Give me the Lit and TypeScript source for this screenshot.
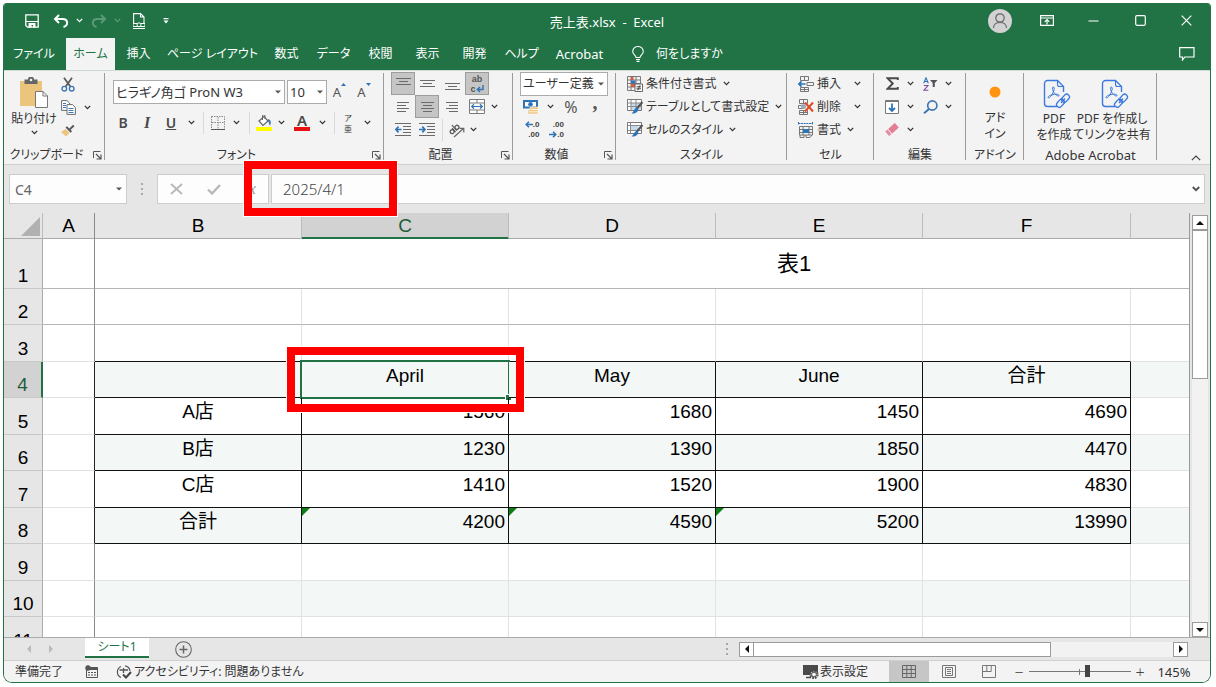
import { LitElement, html, svg, css, nothing } from "lit";
import type { TemplateResult } from "lit";
import { customElement, state } from "lit/decorators.js";
import { classMap } from "lit/directives/class-map.js";

const icon = (w: number, h: number, body: unknown) =>
  html`<svg width=${w} height=${h} viewBox="0 0 ${w} ${h}" fill="none" aria-hidden="true">${body}</svg>`;

const chevron = icon(7, 5, svg`<path d="M.8 .9 3.5 3.6 6.2 .9" stroke="currentColor" stroke-width="1.3"/>`);
const caret = icon(6, 4, svg`<path d="M0 .5H6L3 3.5Z" fill="#555"/>`);

const lines = (rows: Array<[number, number, number]>, w = 16, h = 16) =>
  icon(w, h, rows.map(([x1, x2, y]) => svg`<path d="M${x1} ${y}.5H${x2}" stroke="#6a6a6a"/>`));

const acrobat = icon(28, 30, svg`
  <path d="M14 27.5H4.5A3 3 0 0 1 1.500 24.500V4.500A3 3 0 0 1 4.500 1.500H14.500L20.500 7.500V13" stroke="#3b78e0" stroke-width="1.400"/>
  <path d="M14.500 1.500V5.500A2 2 0 0 0 16.500 7.500H20.500" stroke="#3b78e0" stroke-width="1.100"/>
  <path d="M10.300 8C12.200 8 10.800 13 8.800 16 7 18.700 5.200 19.600 5 18.500 4.800 17 9 15.300 13 15.200 16 15.200 17 16.700 15.500 17 13 17 9.300 12.500 9.500 9.200 9.500 8.400 9.800 8 10.300 8Z" stroke="#3b78e0" stroke-width="1"/>
  <rect x="18" y="16.500" width="9" height="5.500" rx="2.750" transform="rotate(-48 22.500 19.250)" stroke="#3b78e0" stroke-width="1.300"/>
  <rect x="13" y="21.500" width="9" height="5.500" rx="2.750" transform="rotate(-48 17.500 24.250)" stroke="#3b78e0" stroke-width="1.300"/>
  <path d="M18 24 22 19.500" stroke="#3b78e0" stroke-width="1.200"/>`);

const I = {
  save: icon(14, 14, svg`<path d="M.8 .8H13.200V13.200H2.500L.8 11.500Z" stroke="#fff" stroke-width="1.300"/><path d="M1 7.500H13" stroke="#fff"/><path d="M3.500 9H10.500V13.500H8V11H6.500V13.500H3.500Z" fill="#fff"/>`),
  undo: icon(16, 14, svg`<path d="M6 1 2 5 6 9M2.300 5H9.500C15.500 5 15.500 11.500 10.500 13" stroke="currentColor" stroke-width="2"/>`),
  redo: icon(16, 14, svg`<path d="M10 1 14 5 10 9M13.700 5H6.500C.5 5 .5 11.500 5.500 13" stroke="currentColor" stroke-width="2"/>`),
  preview: icon(12, 16, svg`<path d="M.6 10V.6H7.500L11 4V10M7.500 .6V4H11" stroke="#fff" stroke-width="1.100"/><path d="M0 10.500H12V13.500H0Z" stroke="#fff"/><circle cx="6" cy="11.800" r="2" fill="#217346" stroke="#fff"/><path d="M0 15.500H12" stroke="#fff"/>`),
  custom: icon(6, 6, svg`<path d="M.5 .7H5.500" stroke="#fff" stroke-width="1.200"/><path d="M.5 2.500H5.500L3 5.500Z" fill="#fff"/>`),
  user: icon(24, 24, svg`<circle cx="12" cy="12" r="12" fill="#d2d2d2"/><circle cx="12" cy="9" r="4.200" stroke="#666" stroke-width="1.200"/><path d="M5.500 19C5.500 11.500 18.500 11.500 18.500 19" stroke="#666" stroke-width="1.200"/>`),
  ribbon: icon(14, 11, svg`<path d="M.6 .6H13.400V10.400H.6ZM.6 3H13.400" stroke="#fff" stroke-width="1.200"/><path d="M7 9.500V4.500M4.700 6.800 7 4.500 9.300 6.800" stroke="#fff" stroke-width="1.200"/>`),
  min: icon(11, 2, svg`<path d="M.5 1H10.500" stroke="#fff" stroke-width="1.200"/>`),
  max: icon(11, 11, svg`<rect x=".7" y=".7" width="9.600" height="9.600" rx="1.200" stroke="#fff" stroke-width="1.200"/>`),
  close: icon(11, 11, svg`<path d="M.7 .7 10.300 10.300M10.300 .7 .7 10.300" stroke="#fff" stroke-width="1.200"/>`),
  bulb: icon(12, 16, svg`<path d="M4 11.500C4 9 .7 8.500 .7 5.500A5.300 5 0 0 1 11.300 5.500C11.300 8.500 8 9 8 11.500Z" stroke="#fff" stroke-width="1.100"/><path d="M4 13.500H8M4.500 15.300H7.500" stroke="#fff" stroke-width="1.200"/>`),
  comment: icon(16, 14, svg`<path d="M.7 .7H15V10H5.800L3.500 13V10H.7Z" stroke="#fff" stroke-width="1.200"/>`),
  paste: icon(28, 31, svg`<path d="M0 4H22V29H0Z" fill="#ecc57c"/><path d="M4.500 2.500H8A3 3 0 0 1 14 2.500H17.500V7H4.500Z" fill="#666"/><circle cx="11" cy="3" r="1.300" fill="#f3f3f3"/><path d="M15.500 14.500H23L27.500 19V30.500H15.500Z" fill="#fff" stroke="#777"/><path d="M23 14.500V19H27.500" stroke="#777"/>`),
  cut: icon(14, 15, svg`<path d="M3 .8 9.500 9.800M11 .8 4.500 9.800" stroke="#5a5a5a" stroke-width="1.800"/><circle cx="3.300" cy="11.700" r="2.300" stroke="#3f77b4" stroke-width="1.400"/><circle cx="10.700" cy="11.700" r="2.300" stroke="#3f77b4" stroke-width="1.400"/>`),
  copy: icon(15, 15, svg`<path d="M.6 .6H6L8.500 3V10.400H.6Z" fill="#fff" stroke="#6b6b6b"/><path d="M6 4.600H11.500L14.400 7.500V14.400H6Z" fill="#fff" stroke="#6b6b6b"/><path d="M2 3.500H5M2 5.500H5M2 7.500H5M7.500 8.500H12.500M7.500 10.500H12.500M7.500 12.500H12.500" stroke="#3f77b4"/>`),
  brush: icon(14, 13, svg`<path d="M0 8 4.500 5 8.500 9 5 12.500Z" fill="#ecc57c"/><path d="M4.500 3.500 6 2.300 8.300 4.500 12 .8 13.500 2.300 9.700 5.800 11 7.500 9.500 8.800Z" fill="#5a5a5a"/>`),
  launcher: icon(9, 9, svg`<path d="M.5 7V.5H7.500" stroke="#555"/><path d="M3 3 7.500 7.500M8 3.500V8H3.500" stroke="#555" stroke-width="1.200"/>`),
  border: icon(14, 14, svg`<path d="M.5 .5H13.500V13M.5 .5V13M7 1V13M1 6.500H13" stroke="#8a8a8a" stroke-dasharray="1.500 1"/><path d="M0 13.500H14" stroke="#555"/>`),
  fill: icon(16, 16, svg`<path d="M3 6 8 1.500 12 6 7 10.500Z" fill="#fff" stroke="#666" stroke-width="1.200"/><path d="M6.500 5V1A1.200 1.200 0 0 1 9 1V4" stroke="#666"/><path d="M12.300 4C15 5 15.500 8 14 10.500 12.500 9 13.500 7 11.500 6Z" fill="#3f77b4"/><path d="M0 12H16V16H0Z" fill="#ffff00"/>`),
  merge: icon(16, 15, svg`<path d="M.5 .5H15.500V14.500H.5Z" fill="#fff" stroke="#7a7a7a"/><path d="M.5 4H15.500M.5 11H15.500M8 .5V4M8 11V14.500" stroke="#7a7a7a"/><path d="M2.500 7.500H13.500M5 5.300 2.700 7.500 5 9.700M11 5.300 13.300 7.500 11 9.700" stroke="#2f73b7" stroke-width="1.200"/>`),
  dec: icon(16, 13, svg`<path d="M0 .5H16M8 3.500H16M8 6.500H16M8 9.500H16M0 12.500H16" stroke="#6a6a6a"/><path d="M6.500 6.500H1M3.500 3.700 .9 6.500 3.500 9.300" stroke="#2f73b7" stroke-width="1.700"/>`),
  inc: icon(16, 13, svg`<path d="M0 .5H16M8 3.500H16M8 6.500H16M8 9.500H16M0 12.500H16" stroke="#6a6a6a"/><path d="M0 6.500H5.500M3.300 3.700 5.900 6.500 3.300 9.300" stroke="#2f73b7" stroke-width="1.700"/>`),
  orient: icon(16, 16, svg`<g transform="rotate(-42 5 8)" stroke="#555" stroke-width="1.200"><circle cx="2.500" cy="8" r="2"/><path d="M4.800 5.500V10.500"/><circle cx="9" cy="8" r="2"/><path d="M6.800 3V10.500"/></g><path d="M5 15 14.500 6.500M10.500 6.300H14.800V10.500" stroke="#666" stroke-width="1.200"/>`),
  currency: icon(16, 16, svg`<path d="M0 1H15V9.500H0Z" fill="#2f73b7"/><path d="M2 3H13V7.500H2Z" fill="#fff"/><circle cx="7.500" cy="5.200" r="2.300" fill="#2f73b7"/><path d="M7 8H15V15H5V11H7Z" fill="#ecc57c" stroke="#fff" stroke-width=".5"/><path d="M6 12.800H15M8 10.500H15" stroke="#fff" stroke-width=".8"/>`),
  cond: icon(16, 16, svg`<path d="M.5 .5H13.500V14.500H.5ZM.5 4H13.500M.5 7.500H13.500M.5 11H13.500M4 .5V14.500M9 .5V14.500" stroke="#7a7a7a"/><path d="M4 1H6.500V4H4ZM4 8H9V11H4Z" fill="#e2563a"/><path d="M4 4.500H8.500V7.500H4Z" fill="#2f73b7"/><path d="M8 8H15.500V15.500H8Z" fill="#fff" stroke="#666"/><path d="M9.500 10.800H14M9.500 12.800H14M13 9.300 10.700 14.300" stroke="#444"/>`),
  tstyle: icon(16, 15, svg`<path d="M.5 .5H14.500V11.500H.5Z" fill="#fff" stroke="#7a7a7a"/><path d="M4 4H14V11H4Z" fill="#c3d9ef"/><path d="M.5 4H14.500M.5 7.500H14.500M4 .5V11.500M9 .5V11.500" stroke="#8a8a8a"/><path d="M15.500 3 10 9.500" stroke="#555" stroke-width="2.200"/><path d="M10.500 8.500C12.500 11 10 15 4.500 14.500 7 13 7 9 10.500 8.500Z" fill="#2f73b7"/>`),
  cstyle: icon(16, 15, svg`<path d="M.5 .5H14.500V11.500H.5Z" fill="#fff" stroke="#7a7a7a"/><path d="M3.500 3.500H11.500V8.500H3.500Z" fill="#c3d9ef"/><path d="M.5 3.500H14.500M.5 8.500H14.500M3.500 .5V11.500" stroke="#8a8a8a"/><path d="M15.500 3 10 9.500" stroke="#555" stroke-width="2.200"/><path d="M10.500 8.500C12.500 11 10 15 4.500 14.500 7 13 7 9 10.500 8.500Z" fill="#2f73b7"/>`),
  ins: icon(16, 16, svg`<path d="M2.500 .5H10.500V4.500H2.500ZM6.500 .5V4.500M2.500 11.500H10.500V15.500H2.500ZM6.500 11.500V15.500M9 6.500H15.500V9.500H9ZM2.500 13.500H10.500" stroke="#777"/><path d="M7.500 8H1M3.500 5.300 .9 8 3.500 10.700" stroke="#2f73b7" stroke-width="1.700"/>`),
  del: icon(16, 16, svg`<path d="M1.500 .5H9.500V4.500H1.500ZM5.500 .5V4.500M1.500 11.500H9.500V15.500H1.500ZM5.500 11.500V15.500M1.500 13.500H9.500M.5 6.500H6V9.500H.5Z" stroke="#777"/><circle cx="5.500" cy="7.500" r="2.500" fill="#9ab"/><path d="M7 3.500 15 12.500M15 3.500 7 12.500" stroke="#e04a26" stroke-width="2"/>`),
  fmt: icon(16, 16, svg`<path d="M.5 1.500H14.500M.5 0V3M14.500 0V3" stroke="#2f73b7" stroke-dasharray="2 .6"/><path d="M1.500 4.500H14.500V13H1.500ZM1.500 7.500H14.500M1.500 10.500H14.500M5 4.500V13M11 4.500V13M2 13V15.500H6V13M8 13V15.500H12L14 13" stroke="#777"/><path d="M5 7H11V11H5Z" fill="#2f73b7"/>`),
  sum: icon(13, 13, svg`<path d="M11.800 3V1.200H1.600L6.800 6.500 1.600 11.800H11.800V10" stroke="#4a4a4a" stroke-width="1.900"/>`),
  down: icon(14, 14, svg`<path d="M.5 .5H13.500V13.500H.5Z" fill="#fff" stroke="#777"/><path d="M.5 1.500H13.500" stroke="#777"/><path d="M7 3.500V11M4 8 7 11 10 8" stroke="#2f73b7" stroke-width="1.800"/>`),
  eraser: icon(14, 13, svg`<g transform="rotate(-42 7 6.500)"><path d="M.5 3.500H3.500V9.500H.5Z" fill="#e78ba0"/><path d="M4.500 3.500H13.500V9.500H4.500Z" fill="#e27d94"/></g>`),
  sort: icon(15, 14, svg`<path d="M.7 6.200 3 .8 5.300 6.200M1.500 4.500H4.500" stroke="#2f73b7" stroke-width="1.100"/><path d="M.8 8.500H5L.8 13.300H5.300" stroke="#7b4a9b" stroke-width="1.100"/><path d="M7 3H14.500L11.800 6V10H9.700V6Z" fill="#555"/>`),
  find: icon(15, 14, svg`<circle cx="9.300" cy="5.500" r="4.600" stroke="#3f77b4" stroke-width="1.700"/><path d="M6 9 1 13.300" stroke="#3f77b4" stroke-width="2"/>`),
  addin: icon(14, 14, svg`<circle cx="7" cy="7" r="5.500" fill="#ff9410"/>`),
  cancel: icon(13, 12, svg`<path d="M1 1 12 11M12 1 1 11" stroke="#b9b9b9" stroke-width="1.900"/>`),
  check: icon(14, 11, svg`<path d="M1 5.500 5 9.500 13 1" stroke="#b9b9b9" stroke-width="2.400"/>`),
  dots: icon(3, 12, svg`<path d="M0 0H2V2H0ZM0 5H2V7H0ZM0 10H2V12H0Z" fill="#a9a9a9"/>`),
  up: icon(8, 4, svg`<path d="M0 4H8L4 0Z" fill="#111"/>`),
  dn: icon(8, 4, svg`<path d="M0 0H8L4 4Z" fill="#111"/>`),
  lt: icon(4, 8, svg`<path d="M4 0V8L0 4Z" fill="currentColor"/>`),
  rt: icon(4, 8, svg`<path d="M0 0V8L4 4Z" fill="currentColor"/>`),
  plus: icon(17, 17, svg`<circle cx="8.500" cy="8.500" r="7.800" stroke="#666" stroke-width="1.100"/><path d="M4.500 8.500H12.500M8.500 4.500V12.500" stroke="#666" stroke-width="1.500"/>`),
  macro: icon(13, 13, svg`<path d="M2.500 2.500H12.500V12.500H1.500V5" stroke="#555"/><path d="M5 2.500H12.500V5H5Z" fill="#555"/><circle cx="3" cy="3" r="2.700" fill="#555"/><path d="M3 7.500H11M3 10H11" stroke="#555" stroke-dasharray="2 1"/>`),
  access: icon(16, 14, svg`<path d="M5 1.500A6 6 0 0 0 5 12.500M9 .8A6 6 0 0 1 14 6" stroke="#555" stroke-width="1.200"/><path d="M3.500 5H12M7.500 3V8" stroke="#555" stroke-width="1.300"/><path d="M7 9.500 10 12.500 15 7" stroke="#444" stroke-width="2"/>`),
  display: icon(16, 15, svg`<path d="M0 1H15V8H9V11H0Z" fill="#4a4a4a"/><path d="M3 13.500H8" stroke="#4a4a4a" stroke-width="1.500"/><circle cx="11" cy="10.500" r="3.600" fill="#f3f3f3" stroke="#4a4a4a" stroke-width="2" stroke-dasharray="1.800 1"/><circle cx="11" cy="10.500" r="2.400" stroke="#4a4a4a"/>`),
  vNormal: icon(14, 13, svg`<path d="M.5 .5H13.500V12.500H.5ZM.5 4.500H13.500M.5 8.500H13.500M4.800 .5V12.500M9.200 .5V12.500" stroke="#666"/>`),
  vPage: icon(14, 13, svg`<path d="M.5 .5H13.500V12.500H.5ZM3.500 2.500H10.500V10.500H3.500ZM5 4.500H9M5 6.500H9M5 8.500H9" stroke="#777"/>`),
  vBreak: icon(14, 13, svg`<path d="M.5 .5H13.500V12.500H.5ZM4.800 .5V6.500M9.200 .5V6.500H.5" stroke="#777"/>`),
  collapse: icon(10, 6, svg`<path d="M.8 5.200 5 1 9.200 5.200" stroke="#444" stroke-width="1.200"/>`),
  corner: icon(19, 19, svg`<path d="M19 0V19H0Z" fill="#b1b1b1"/>`),
  fdrop: icon(8, 6, svg`<path d="M.8 1 4 4.200 7.200 1" stroke="#555" stroke-width="2"/>`),
  grow: icon(5, 3, svg`<path d="M0 3 2.500 0 5 3Z" fill="#2f73b7"/>`),
  shrink: icon(5, 3, svg`<path d="M0 0H5L2.500 3Z" fill="#2f73b7"/>`),
  arrowL: icon(8, 7, svg`<path d="M8 3.500H1.500M4 .8 1.200 3.500 4 6.200" stroke="#2f73b7" stroke-width="1.500"/>`),
  arrowR: icon(8, 7, svg`<path d="M0 3.500H6.500M4 .8 6.800 3.500 4 6.200" stroke="#2f73b7" stroke-width="1.500"/>`),
  ret: icon(8, 8, svg`<path d="M7 0V4.500H1.500M4 2 1.300 4.500 4 7" stroke="#2f73b7" stroke-width="1.400"/>`),
};

interface Row { n: number; cells: string[]; }

const ROWS: Row[] = [
  { n: 4, cells: ["", "April", "May", "June", "合計"] },
  { n: 5, cells: ["A店", "1560", "1680", "1450", "4690"] },
  { n: 6, cells: ["B店", "1230", "1390", "1850", "4470"] },
  { n: 7, cells: ["C店", "1410", "1520", "1900", "4830"] },
  { n: 8, cells: ["合計", "4200", "4590", "5200", "13990"] },
];

const TABS: Array<[string, string]> = [
  ["ファイル", "t-l"], ["ホーム", "on"], ["挿入", ""], ["ページ レイアウト", "t-xl"], ["数式", ""], ["データ", ""],
  ["校閲", ""], ["表示", ""], ["開発", ""], ["ヘルプ", ""], ["Acrobat", "t-m"],
];

@customElement("app-root")
export class AppRoot extends LitElement {
  @state() private zoom = 58;

  static styles = css`
    :host { display: block; min-height: 100vh; box-sizing: border-box; padding: 3px 5px 4px 3px; background: #fff;
      font: 12px/16px "Noto Sans", "Noto Sans CJK JP", sans-serif; font-feature-settings: "palt"; color: #333; }
    *, *::before { box-sizing: border-box; }
    svg { display: block; flex: none; }
    button { appearance: none; border: 0; background: none; padding: 0; margin: 0; font: inherit; color: inherit;
      font-feature-settings: inherit; display: flex; align-items: center; justify-content: center; white-space: nowrap; }
    input, select { appearance: none; font: inherit; color: inherit; font-feature-settings: inherit; margin: 0; min-width: 0;
      border: 1px solid #ababab; border-radius: 0; background: #fff; outline: none; }
    .window { height: calc(100vh - 7px); min-height: 480px; display: grid; grid-template-rows: 35px 32px 95px 48px 1fr 23px 22px;
      border: 1px solid #217346; border-top: 0; border-radius: 4px 4px 9px 9px; overflow: hidden; background: #e6e6e6; }
    .title { background: #217346; color: #fff; display: grid; grid-template-columns: 1fr auto 1fr; align-items: center; }
    .title h1 { font: inherit; font-size: 13px; margin: 2px 0 0; white-space: pre; }
    .quick { display: grid; grid-template-columns: 32px 26px 10px 29px 8px 36px 18px; padding-left: 12px; height: 22px; }
    .dim { color: #5b9a78; }
    .sys { display: grid; grid-template-columns: 46px 47px 47px 46px 47px; justify-content: end; height: 32px; }
    .tabs { background: #217346; color: #fff; display: flex; }
    .tabs button { width: 47px; font-size: 12px; }
    .tabs .on { width: 49px; background: #f3f3f3; color: #217346; }
    .tabs .t-l { width: 62px; padding-right: 2px; }
    .tabs .t-xl { width: 101px; }
    .tabs .t-m { width: 69px; font-size: 13px; }
    .tabs .tell { width: auto; gap: 12px; padding-left: 18px; }
    .tabs .note { margin-left: auto; }
    .ribbon { background: #f3f3f3; border-top: 1px solid #cfd8d3; border-bottom: 1px solid #d0d0d0; display: grid;
      grid-template-columns: 101px 279px 129px 103px 171px 87px 92px 58px 133px 1fr; }
    .group { display: grid; grid-template: 74px 18px / minmax(0, 1fr); padding-top: 1px; position: relative; }
    .group::after { content: ""; position: absolute; right: 0; top: 2px; height: 87px; width: 1px; background: #9b9b9b; }
    .name { display: grid; grid-template-columns: minmax(0, 1fr); align-items: center; justify-items: center; white-space: nowrap; font-size: 12px; }
    .name.more { grid-template-columns: 1fr 16px; }
    .latin { font-size: 13px; }
    .stack { display: grid; grid-auto-rows: 23px; align-content: start; }
    .row { display: grid; align-items: center; justify-items: center; }
    .row > button { width: 100%; height: 23px; }
    .pressed { background: #c5c5c5; border: 1px solid #9d9d9d; }
    .bar { width: 1px; height: 22px; background: #d8d8d8; }
    .big { flex-direction: column; justify-content: flex-start; }
    .clip { display: grid; grid-template-columns: 44px 24px 14px; padding-left: 8px; }
    .clip .big { padding-top: 5px; gap: 3px; }
    .clip .stack { padding-top: 1px; }
    .font { padding: 8px 0 0 6px; display: grid; grid-template-rows: 23px 23px; gap: 8px; }
    .f1 { grid-template-columns: 176px 40px 25px 24px; }
    .f2 { grid-template-columns: 24px 24px 24px 16px 8px 22px 14px 12px 18px 16px 26px 14px 10px 18px 20px; }
    .combo { display: grid; width: 100%; align-items: center; }
    .combo > * { grid-area: 1 / 1; }
    .combo select { height: 24px; padding: 0 2px; width: 100%; font-size: 13px; }
    .combo svg { justify-self: end; margin-right: 4px; pointer-events: none; }
    .f1 .wide { padding: 0 2px; }
    .size { display: flex; font-size: 13px; line-height: 20px; color: #555; }
    .size svg { margin-top: 1px; }
    .glyph { font-size: 14px; font-weight: 600; color: #4a4a4a; }
    .it { font-style: italic; font-family: "Liberation Serif", serif; font-size: 16px; }
    .un { text-decoration: underline; }
    .fc { border-bottom: 4px solid #e81010; line-height: 13px; width: 16px; font-size: 15px; }
    .ruby { display: grid; font: 8px/11px "Noto Sans CJK JP", sans-serif; justify-items: center; }
    .al { padding-left: 7px; }
    .a1 { grid-template-columns: 24px 24px 26px 24px 10px; }
    .a3 { grid-template-columns: 24px 24px 6px 24px 8px; }
    .wrap { display: grid; grid-template-columns: 6px 8px; font: bold 9px/10px "Liberation Sans", sans-serif; color: #555; align-items: center; }
    .wrap span { grid-column: span 2; }
    .num { padding-left: 7px; }
    .num .combo { width: 88px; }
    .num .combo select { font-size: 12px; }
    .n2 { grid-template-columns: 22px 16px 26px 22px; justify-content: start; }
    .n3 { grid-template-columns: 24px 25px; justify-content: start; }
    .pct { font-size: 16px; color: #555; }
    .comma { font: bold 20px/23px "Liberation Serif", serif; color: #555; padding-bottom: 8px; }
    .dp { display: grid; justify-items: end; font: bold 8px/10px "Liberation Sans", sans-serif; color: #444; }
    .dp span { display: flex; align-items: center; }
    .list { padding-left: 11px; }
    .list button { justify-content: flex-start; gap: 3px; }
    .list .c { margin-left: 3px; }
    .list .far .c { margin-left: 10px; }
    .edit { padding-left: 8px; }
    .e1 { grid-template-columns: 20px 16px 24px 12px; }
    .tall { padding-top: 5px; display: grid; }
    .tall button { gap: 3px; }
    .tall button svg { height: 30px; }
    .pdfs { display: grid; grid-template-columns: 42px 74px; padding: 7px 0 0 9px; align-items: start; }
    .pdfs svg { margin-left: 6px; }
    .pdfs button { gap: 2px; }
    .last { display: flex; align-items: flex-end; justify-content: flex-end; padding: 0 9px 3px 0; }
    .formula { display: grid; grid-template-columns: 118px 30px 112px 1fr; padding: 9px 5px 9px 5px; position: relative; align-items: stretch; }
    .formula input, .trio { border: 1px solid #cdcdcd; background: #fdfdfd; height: 30px; }
    .formula input { width: 100%; padding: 0 5px; font-size: 14px; color: #666; }
    .formula .combo svg { margin-right: 5px; }
    .grip { display: grid; place-items: center; }
    .trio { display: grid; grid-template-columns: 37px 37px 36px; }
    .fx { font: italic 16px "Liberation Serif", serif; color: #999; }
    .formula .value { padding-left: 2px; }
    .formula .value input { padding-left: 11px; font-size: 15px; font-weight: 300; color: #444; }
    .mark { position: absolute; border: 8px solid #f00; outline: 1px solid #fff; pointer-events: none; z-index: 5; }
    .m1 { left: 240px; top: -4px; width: 153px; height: 55px; }
    .m2 { left: -15px; top: -15px; right: -16px; bottom: -15px; }
    .sheet { display: grid; grid-template-columns: 1fr 20px; min-height: 0; min-width: 0; }
    .view { overflow: hidden; border-right: 1px solid #9b9b9b; min-width: 0; min-height: 0;
      font-feature-settings: normal; font-family: "Liberation Sans", "Noto Sans CJK JP", sans-serif; color: #000; font-size: 19px; }
    table { table-layout: fixed; border-collapse: separate; border-spacing: 0; width: 1490px; background: #fff; }
    th, td { padding: 0; font-weight: 400; border-right: 1px solid #e0e3e2; border-bottom: 1px solid #e0e3e2; line-height: 28px; vertical-align: top; overflow: visible; }
    .w0 { width: 39px; } .w1 { width: 52px; } .w2 { width: 207px; } .w3 { width: 208px; } .w4 { width: 156px; }
    thead th { height: 26px; line-height: 25px; background: #e6e6e6; border-color: #ababab; border-right-color: #bcbcbc; }
    thead .sel { background: #d2d2d2; color: #1e5c3a; border-bottom-color: #217346; box-shadow: inset 0 -1px #217346; }
    thead svg { margin-left: 17px; margin-top: 4px; }
    tbody th { background: #e6e6e6; line-height: 24px; vertical-align: bottom; border-right-color: #ababab; border-bottom-color: #c9c9c9; }
    tbody .sel th { background: #d2d2d2; color: #1e5c3a; border-right: 2px solid #217346; }
    tr.h50 > * { height: 50px; }
    tr.h36 > * { height: 36px; }
    tr.h37 > * { height: 37px; }
    tbody td:nth-child(2) { border-right-color: #8a8a8a; }
    thead th:nth-child(2) { border-right-color: #8a8a8a; }
    tr.line td { border-bottom-color: #b5b5b5; }
    .merged { text-align: center; vertical-align: middle; font-size: 22px; }
    tr.band td:nth-child(n + 3) { background: #f3f7f6; }
    tr.top td:nth-child(n + 3):nth-child(-n + 7) { border-bottom-color: #111; }
    tr.data td:nth-child(n + 3):nth-child(-n + 7) { border-color: #111; text-align: right; padding-right: 3px; position: relative; }
    tr.data td.mid:nth-child(n + 3):nth-child(-n + 7) { text-align: center; padding-right: 0; }
    tr.data td:nth-child(2) { border-right-color: #222; }
    .cursor { position: absolute; inset: -2px; border: 2px solid #217346; }
    .cursor::after { content: ""; position: absolute; right: -3px; bottom: -3px; width: 5px; height: 5px; background: #217346; outline: 1px solid #fff; }
    .flag { position: absolute; left: 0; top: 0; border-top: 8px solid #0d7d18; border-right: 8px solid transparent; }
    .vs { display: grid; grid-template-rows: 15px 1fr 15px; width: 16px; margin: 2px 0 0 2px; background: #f2f2f2; }
    .sq { background: #fff; border: 1px solid #9b9b9b; color: #111; }
    .vt { background: #fff; border: 1px solid #9b9b9b; height: 100%; }
    .vbar { display: grid; grid-template-rows: 38% 1fr; }
    .foot { border-top: 1px solid #ababab; display: grid; grid-template-columns: 81px 64px 68px 1fr 484px; align-items: stretch; }
    .nav { display: flex; gap: 18px; align-items: center; padding-left: 23px; color: #b9b9b9; }
    .stab { background: #fff; color: #217346; border-bottom: 2px solid #217346; height: 20px; }
    .hs { display: grid; grid-template-columns: 13px 15px 1fr 15px 22px; align-items: center; }
    .hs > button { height: 15px; }
    .track { background: #f2f2f2; height: 15px; }
    .ht { background: #fff; border: 1px solid #9b9b9b; border-left: 0; height: 15px; width: 71%; }
    .status { background: #f3f3f3; border-top: 1px solid #d0d0d0; display: flex; align-items: center; padding-left: 11px; white-space: nowrap; }
    .status .st { gap: 2px; margin-left: 18px; }
    .status .mac { margin-left: 22px; }
    .right { margin-left: auto; display: grid; grid-template-columns: 86px 40px 40px 40px 20px 102px 18px 61px; height: 100%; }
    .right .disp { justify-content: flex-start; gap: 1px; }
    .cur { background: #c6c6c6; }
    .sign { font-size: 16px; font-weight: 300; color: #444; }
    .right .pc { font-size: 13px; padding-right: 11px; }
    input[type="range"] { border: 0; height: 20px; width: 102px; background:
      linear-gradient(#777, #777) 50px 8px / 1px 6px no-repeat, linear-gradient(#777, #777) 0 10px / 100% 1px no-repeat; }
    input[type="range"]::-webkit-slider-thumb { appearance: none; width: 5px; height: 12px; background: #444; }
  `;

  private group(name: string, body: TemplateResult, launcher = true, latin = false) {
    return html`<section class="group">${body}
      <div class=${classMap({ name: true, more: launcher })}><span class=${latin ? "latin" : ""}>${name}</span>
        ${launcher ? html`<button aria-label="${name}の詳細">${I.launcher}</button>` : nothing}</div></section>`;
  }

  private b(label: string, body: unknown, cls = "") {
    return html`<button class=${cls} aria-label=${label}>${body}</button>`;
  }

  private get drop() { return this.b("オプション", chevron); }

  private renderRibbon() {
    const bar = html`<i class="bar"></i>`;
    return html`<div class="ribbon">
      ${this.group("クリップボード", html`<div class="clip">
        <button class="big">${I.paste}<span>貼り付け</span>${chevron}</button>
        <div class="stack row">${this.b("切り取り", I.cut)}${this.b("コピー", I.copy)}${this.b("書式のコピー", I.brush)}</div>
        <div class="stack row"><span></span>${this.drop}</div></div>`)}
      ${this.group("フォント", html`<div class="font">
        <div class="row f1">
          <div class="combo wide"><select aria-label="フォント"><option>ヒラギノ角ゴ ProN W3</option></select>${caret}</div>
          <div class="combo"><select aria-label="フォント サイズ"><option>10</option></select>${caret}</div>
          ${this.b("拡大", html`<span class="size">A${I.grow}</span>`)}
          ${this.b("縮小", html`<span class="size">A${I.shrink}</span>`)}
        </div>
        <div class="row f2">
          ${this.b("太字", "B", "glyph")}${this.b("斜体", "I", "glyph it")}${this.b("下線", "U", "glyph un")}${this.drop}${bar}
          ${this.b("罫線", I.border)}${this.drop}${bar}${this.b("塗りつぶし", I.fill)}${this.drop}
          ${this.b("文字色", html`<span class="glyph fc">A</span>`)}${this.drop}${bar}
          ${this.b("ふりがな", html`<span class="ruby"><span>ア</span><span>亜</span></span>`)}${this.drop}
        </div></div>`)}
      ${this.group("配置", html`<div class="stack al">
        <div class="row a1">${this.b("上揃え", lines([[0, 15, 2], [3, 12, 5], [0, 15, 8]], 15, 16), "pressed")}
          ${this.b("上下中央揃え", lines([[0, 15, 4], [3, 12, 7], [0, 15, 10]], 15, 16))}
          ${this.b("下揃え", lines([[0, 15, 7], [3, 12, 10], [0, 15, 13]], 15, 16))}
          ${this.b("折り返し", html`<span class="wrap"><span>ab</span>c${I.ret}</span>`, "pressed")}</div>
        <div class="row a1">${this.b("左揃え", lines([[0, 12, 1], [0, 9, 4], [0, 12, 7], [0, 9, 10]], 12, 12))}
          ${this.b("中央揃え", lines([[0, 13, 1], [2, 11, 4], [0, 13, 7], [2, 11, 10]], 13, 12), "pressed")}
          ${this.b("右揃え", lines([[0, 12, 1], [3, 12, 4], [0, 12, 7], [3, 12, 10]], 12, 12))}
          ${this.b("結合", I.merge)}${this.drop}</div>
        <div class="row a3">${this.b("字下げ解除", I.dec)}${this.b("字下げ", I.inc)}${bar}${this.b("方向", I.orient)}${this.drop}</div></div>`)}
      ${this.group("数値", html`<div class="stack num">
        <div class="combo"><select aria-label="表示形式"><option>ユーザー定義</option></select>${caret}</div>
        <div class="row n2">${this.b("通貨", I.currency)}${this.drop}${this.b("パーセント", "%", "pct")}${this.b("桁区切り", html`<span class="comma">,</span>`)}</div>
        <div class="row n3">${this.b("小数点以下を増やす", html`<span class="dp"><span>${I.arrowL}.0</span><span>.00</span></span>`)}${this.b("小数点以下を減らす", html`<span class="dp"><span>.00</span><span>${I.arrowR}.0</span></span>`)}</div></div>`)}
      ${this.group("スタイル", html`<div class="stack list">
        <button>${I.cond}<span>条件付き書式</span><span class="c">${chevron}</span></button>
        <button>${I.tstyle}<span>テーブルとして書式設定</span><span class="c">${chevron}</span></button>
        <button>${I.cstyle}<span>セルのスタイル</span><span class="c">${chevron}</span></button></div>`, false)}
      ${this.group("セル", html`<div class="stack list">
        <button class="far">${I.ins}<span>挿入</span><span class="c">${chevron}</span></button>
        <button class="far">${I.del}<span>削除</span><span class="c">${chevron}</span></button>
        <button>${I.fmt}<span>書式</span><span class="c">${chevron}</span></button></div>`, false)}
      ${this.group("編集", html`<div class="stack edit">
        <div class="row e1">${this.b("合計", I.sum)}${this.drop}${this.b("並べ替え", I.sort)}${this.drop}</div>
        <div class="row e1">${this.b("フィル", I.down)}${this.drop}${this.b("検索", I.find)}${this.drop}</div>
        <div class="row e1">${this.b("クリア", I.eraser)}${this.drop}</div></div>`, false)}
      ${this.group("アドイン", html`<div class="tall"><button class="big">${I.addin}<span>アド<br />イン</span></button></div>`, false)}
      ${this.group("Adobe Acrobat", html`<div class="pdfs"><button class="big">${acrobat}<span>PDF<br />を作成</span></button>
        <button class="big">${acrobat}<span>PDF を作成し<br />てリンクを共有</span></button></div>`, false, true)}
      <div class="last">${this.b("リボンを折りたたむ", I.collapse)}</div>
    </div>`;
  }

  private blank(n: number, cls: string) {
    return html`<tr class=${cls}><th scope="row">${n}</th>${Array.from({ length: 8 }, () => html`<td></td>`)}</tr>`;
  }

  private renderTable() {
    return html`<table>
      <colgroup><col class="w0" /><col class="w1" /><col class="w2" /><col class="w2" /><col class="w2" /><col class="w2" /><col class="w3" /><col class="w2" /><col class="w4" /></colgroup>
      <thead><tr><th>${I.corner}</th>${["A", "B", "C", "D", "E", "F", "", ""].map(
        (c) => html`<th scope="col" class=${c === "C" ? "sel" : ""}>${c}</th>`)}</tr></thead>
      <tbody>
        <tr class="h50 line"><th scope="row">1</th><td></td><td class="merged" colspan="7">表1</td></tr>
        ${this.blank(2, "h36 line")}${this.blank(3, "h37 top")}
        ${ROWS.map((r) => html`<tr class=${classMap({ data: true, sel: r.n === 4, band: r.n % 2 === 0, h36: r.n % 2 === 0, h37: r.n % 2 === 1 })}>
          <th scope="row">${r.n}</th><td></td>
          ${r.cells.map((c, i) => html`<td class=${i === 0 || r.n === 4 ? "mid" : ""}>${c}${
            r.n === 4 && i === 1 ? html`<i class="cursor"></i><i class="mark m2"></i>` : nothing}${
            r.n === 8 && i > 0 && i < 4 ? html`<i class="flag"></i>` : nothing}</td>`)}
          <td></td><td></td></tr>`)}
        ${this.blank(9, "h37")}${this.blank(10, "h36 band")}${this.blank(11, "h37")}
      </tbody></table>`;
  }

  render() {
    return html`<div class="window">
      <header class="title">
        <div class="quick">${this.b("保存", I.save)}${this.b("元に戻す", I.undo)}${this.drop}${this.b("やり直し", I.redo, "dim")}${this.b("オプション", chevron, "dim")}${this.b("印刷プレビュー", I.preview)}${this.b("カスタマイズ", I.custom)}</div>
        <h1>売上表.xlsx  -  Excel</h1>
        <div class="sys">${this.b("アカウント", I.user)}${this.b("リボンの表示", I.ribbon)}${this.b("最小化", I.min)}${this.b("最大化", I.max)}${this.b("閉じる", I.close)}</div>
      </header>
      <nav class="tabs">${TABS.map(([t, c]) => html`<button class=${c}>${t}</button>`)}
        <button class="tell">${I.bulb}<span>何をしますか</span></button>
        ${this.b("コメント", I.comment, "note")}</nav>
      ${this.renderRibbon()}
      <div class="formula">
        <div class="combo"><input aria-label="名前ボックス" .value=${"C4"} />${caret}</div>
        <div class="grip">${I.dots}</div>
        <div class="trio">${this.b("キャンセル", I.cancel)}${this.b("入力", I.check)}${this.b("関数の挿入", "fx", "fx")}</div>
        <div class="combo value"><input aria-label="数式バー" .value=${"2025/4/1"} />${I.fdrop}</div>
        <i class="mark m1"></i>
      </div>
      <main class="sheet"><div class="view">${this.renderTable()}</div>
        <div class="vs">${this.b("上へ", I.up, "sq")}<div class="vbar"><div class="vt"></div></div>${this.b("下へ", I.dn, "sq")}</div></main>
      <div class="foot">
        <div class="nav">${I.lt}${I.rt}</div><button class="stab">シート1</button>${this.b("新しいシート", I.plus)}<span></span>
        <div class="hs">${I.dots}${this.b("左へ", I.lt, "sq")}<div class="track"><div class="ht"></div></div>${this.b("右へ", I.rt, "sq")}</div>
      </div>
      <footer class="status"><span>準備完了</span>${this.b("マクロの記録", I.macro, "mac")}
        <button class="st">${I.access}<span>アクセシビリティ: 問題ありません</span></button>
        <div class="right"><button class="disp">${I.display}<span>表示設定</span></button>
          ${this.b("標準", I.vNormal, "cur")}${this.b("ページ レイアウト", I.vPage)}${this.b("改ページ", I.vBreak)}
          ${this.b("縮小", "−", "sign")}
          <input type="range" aria-label="ズーム" min="0" max="100" .value=${String(this.zoom)}
            @input=${(e: Event) => { this.zoom = Number((e.target as HTMLInputElement).value); }} />
          ${this.b("拡大", "+", "sign")}<button class="pc">145%</button></div></footer>
    </div>`;
  }
}
